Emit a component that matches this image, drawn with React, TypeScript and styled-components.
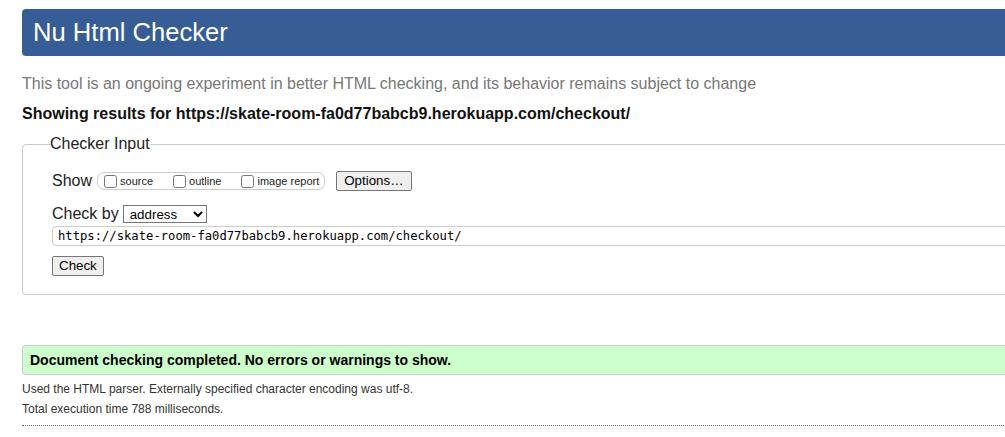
import React from "react";
import styled, { createGlobalStyle } from "styled-components";

const Global = createGlobalStyle`
  html, body {
    margin: 0;
    padding: 0;
    background: #fff;
    overflow: hidden;
  }
  body {
    font-family: Arial, "Liberation Sans", sans-serif;
    color: #000;
  }
`;

const Page = styled.div`
  width: 1100px;
  padding: 9px 0 0 22px;
  display: flex;
  flex-direction: column;
`;

const Header = styled.h1`
  margin: 0;
  height: 47px;
  background: #365d95;
  border-radius: 4px;
  color: #fff;
  font-weight: normal;
  font-size: 25.6px;
  display: flex;
  align-items: center;
  padding-left: 11px;
`;

const Intro = styled.p`
  margin: 18px 0 0;
  font-size: 16px;
  line-height: 20px;
  color: #777;
`;

const Showing = styled.p`
  margin: 10px 0 0;
  font-size: 16px;
  line-height: 20px;
  font-weight: bold;
  color: #111;
`;

const Fieldset = styled.fieldset`
  margin: 10px 0 0;
  border: 1px solid #ccc;
  border-radius: 4px;
  padding: 17px 0 18px 29px;
  min-inline-size: 0;
  display: flex;
  flex-direction: column;
`;

const Legend = styled.legend`
  padding: 0;
  margin-left: -2px;
  font-size: 16px;
  line-height: 20px;
  color: #222;
`;

const Row = styled.div<{ $gap?: number }>`
  display: flex;
  align-items: center;
  margin-top: ${(p) => p.$gap ?? 0}px;
`;

const Label = styled.span`
  font-size: 16px;
  line-height: 20px;
  color: #222;
`;

const OptionGroup = styled.div`
  margin-left: 5px;
  height: 16px;
  border: 1px solid #ccc;
  border-radius: 7px;
  display: flex;
  align-items: center;
  padding: 0 5px 0 3px;
  gap: 17px;
`;

const Opt = styled.label`
  display: flex;
  align-items: center;
  font-size: 11px;
  color: #222;
`;

const Box = styled.input`
  width: 13px;
  height: 13px;
  margin: 0 3px 0 3px;
`;

const Button = styled.button<{ $ml?: number }>`
  font-family: Arial, "Liberation Sans", sans-serif;
  font-size: 13.33px;
  height: 20px;
  padding: 0 7px;
  margin-left: ${(p) => p.$ml ?? 0}px;
  background: #efefef;
  border: 1px solid #767676;
  border-radius: 2px;
  color: #000;
  line-height: 18px;
`;

const CheckButton = styled(Button)`
  padding: 0 6px;
  align-self: flex-start;
  margin-top: 10px;
`;

const Select = styled.select`
  margin-left: 4px;
  width: 84px;
  height: 18px;
  font-family: Arial, "Liberation Sans", sans-serif;
  font-size: 13.33px;
  border: 1px solid #767676;
  border-radius: 0;
  background: #fff;
  color: #000;
  padding: 0 0 0 2px;
`;

const UrlInput = styled.input`
  margin-top: 2px;
  height: 20px;
  box-sizing: border-box;
  width: 1100px;
  border: 1px solid #ccc;
  border-radius: 4px;
  padding: 0 0 0 5px;
  font-family: "DejaVu Sans Mono", monospace;
  font-size: 12.2px;
  color: #000;
  outline: none;
`;

const Success = styled.div`
  margin-top: 50px;
  height: 28px;
  background: #ccffcc;
  border: 1px solid #ccc;
  border-radius: 4px;
  display: flex;
  align-items: center;
  padding-left: 7px;
  font-size: 14px;
  font-weight: bold;
  color: #000;
`;

const Detail = styled.p<{ $mt: number }>`
  margin: ${(p) => p.$mt}px 0 0;
  font-size: 12px;
  line-height: 16px;
  color: #333;
`;

const Rule = styled.hr`
  margin: 8px 0 0;
  border: 0;
  border-top: 1px dotted #666;
  height: 0;
`;

const url = "https://skate-room-fa0d77babcb9.herokuapp.com/checkout/";

export default function App() {
  return (
    <>
      <Global />
      <Page>
        <Header>Nu Html Checker</Header>
        <Intro>
          This tool is an ongoing experiment in better HTML checking, and its
          behavior remains subject to change
        </Intro>
        <Showing>Showing results for {url}</Showing>
        <Fieldset>
          <Legend>Checker Input</Legend>
          <Row>
            <Label>Show</Label>
            <OptionGroup>
              <Opt>
                <Box type="checkbox" />
                source
              </Opt>
              <Opt>
                <Box type="checkbox" />
                outline
              </Opt>
              <Opt>
                <Box type="checkbox" />
                image report
              </Opt>
            </OptionGroup>
            <Button $ml={11}>Options…</Button>
          </Row>
          <Row $gap={13}>
            <Label>Check by</Label>
            <Select defaultValue="address">
              <option value="address">address</option>
              <option value="file">file upload</option>
              <option value="text">text input</option>
            </Select>
          </Row>
          <UrlInput type="text" defaultValue={url} readOnly />
          <CheckButton>Check</CheckButton>
        </Fieldset>
        <Success>Document checking completed. No errors or warnings to show.</Success>
        <Detail $mt={6}>
          Used the HTML parser. Externally specified character encoding was utf-8.
        </Detail>
        <Detail $mt={4}>Total execution time 788 milliseconds.</Detail>
        <Rule />
      </Page>
    </>
  );
}
